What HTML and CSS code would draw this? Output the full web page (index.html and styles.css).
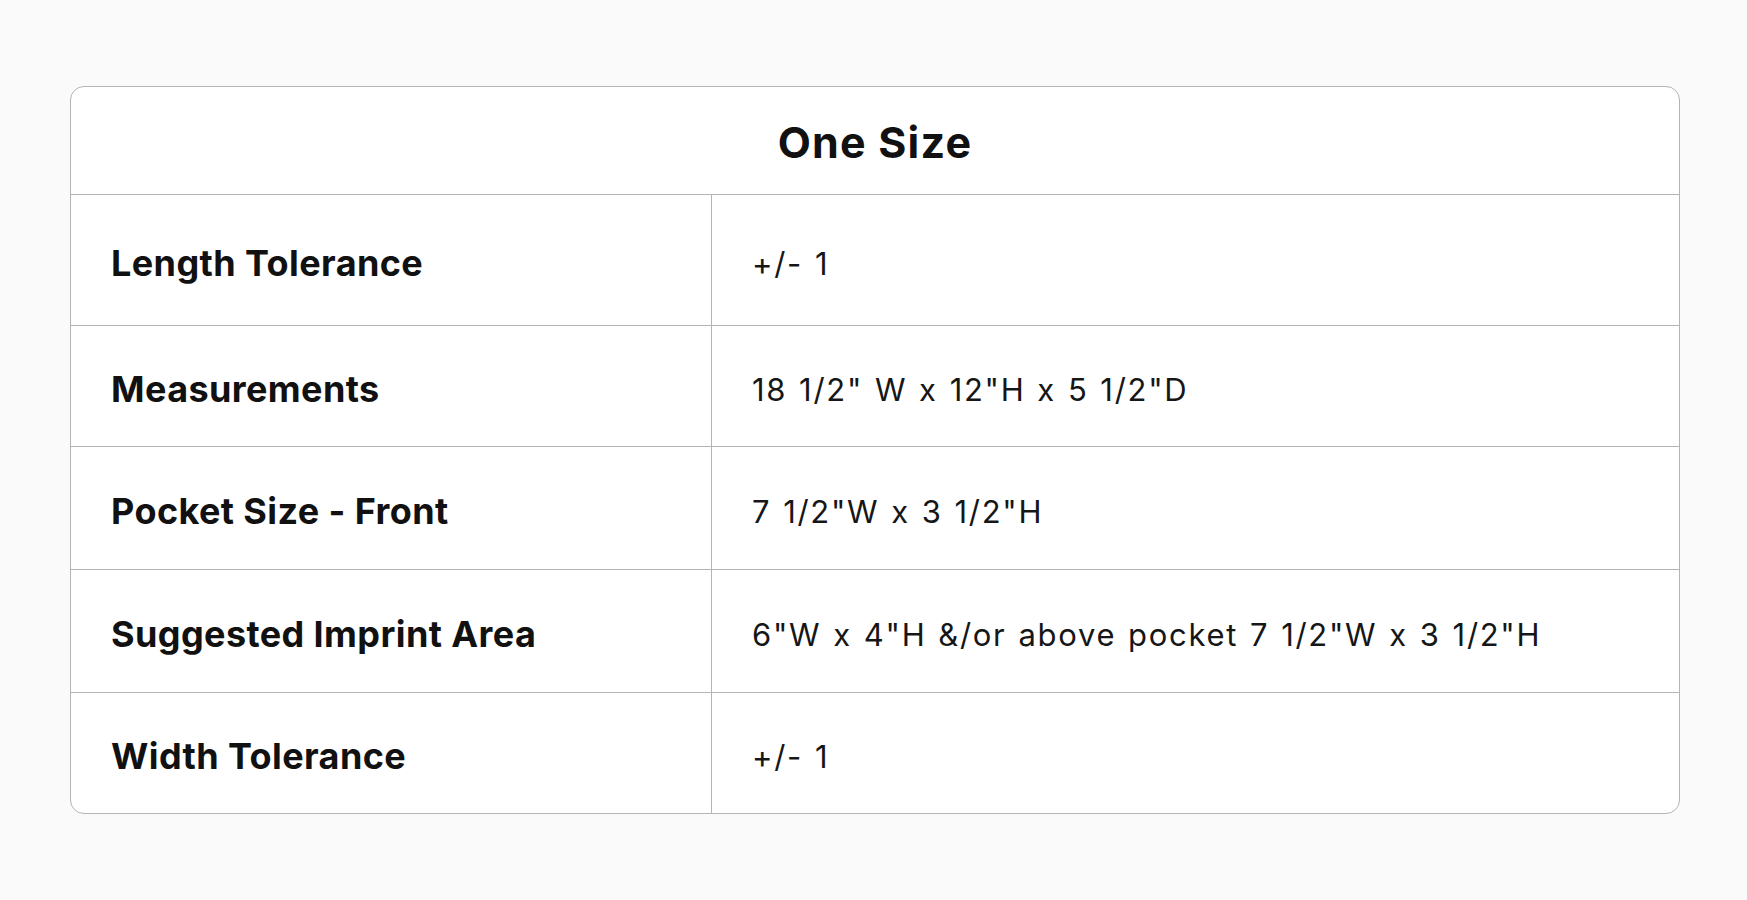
FILE: index.html
```html
<!DOCTYPE html>
<html lang="en">
<head>
<meta charset="utf-8">
<title>One Size</title>
<link rel="stylesheet" href="styles.css">
</head>
<body>
<div class="spec">
  <div class="spec-head">One Size</div>
  <div class="spec-row r1">
    <div class="spec-label">Length Tolerance</div>
    <div class="spec-value">+/- 1</div>
  </div>
  <div class="spec-row r2">
    <div class="spec-label">Measurements</div>
    <div class="spec-value">18 1/2" W x 12"H x 5 1/2"D</div>
  </div>
  <div class="spec-row r3">
    <div class="spec-label">Pocket Size - Front</div>
    <div class="spec-value">7 1/2"W x 3 1/2"H</div>
  </div>
  <div class="spec-row r4">
    <div class="spec-label">Suggested Imprint Area</div>
    <div class="spec-value">6"W x 4"H &amp;/or above pocket 7 1/2"W x 3 1/2"H</div>
  </div>
  <div class="spec-row r5">
    <div class="spec-label">Width Tolerance</div>
    <div class="spec-value">+/- 1</div>
  </div>
</div>
</body>
</html>
```

FILE: styles.css
```css
html, body {
  margin: 0;
  padding: 0;
  background: #fafafa;
}
body {
  padding-top: 86px;
  padding-left: 70px;
  font-family: Inter, Lato, "Liberation Sans", sans-serif;
  color: #111;
}
.spec {
  width: 1610px;
  box-sizing: border-box;
  border: 1.5px solid #b4b4b4;
  border-radius: 14px;
  background: #fff;
  overflow: hidden;
}
.spec-head {
  height: 108px;
  display: flex;
  align-items: center;
  justify-content: center;
  font-size: 43px;
  font-weight: 700;
  letter-spacing: 1.2px;
  border-bottom: 1.5px solid #b4b4b4;
  padding-top: 2px;
  box-sizing: border-box;
}
.spec-row {
  display: grid;
  grid-template-columns: 641px 1fr;
  border-bottom: 1.5px solid #b4b4b4;
  box-sizing: border-box;
}
.spec-row:last-child { border-bottom: none; }
.r1 { height: 131px; }
.r2 { height: 121px; }
.r3 { height: 123px; }
.r4 { height: 123px; }
.r5 { height: 120px; }
.spec-label, .spec-value {
  display: flex;
  align-items: center;
  padding-left: 40px;
  padding-top: 6px;
}
.spec-label {
  font-size: 36px;
  font-weight: 700;
  letter-spacing: 0.4px;
  border-right: 1.5px solid #b4b4b4;
}
.spec-value {
  font-size: 31px;
  font-weight: 400;
  color: #161616;
  letter-spacing: 1.7px;
  word-spacing: 1.5px;
}
```
